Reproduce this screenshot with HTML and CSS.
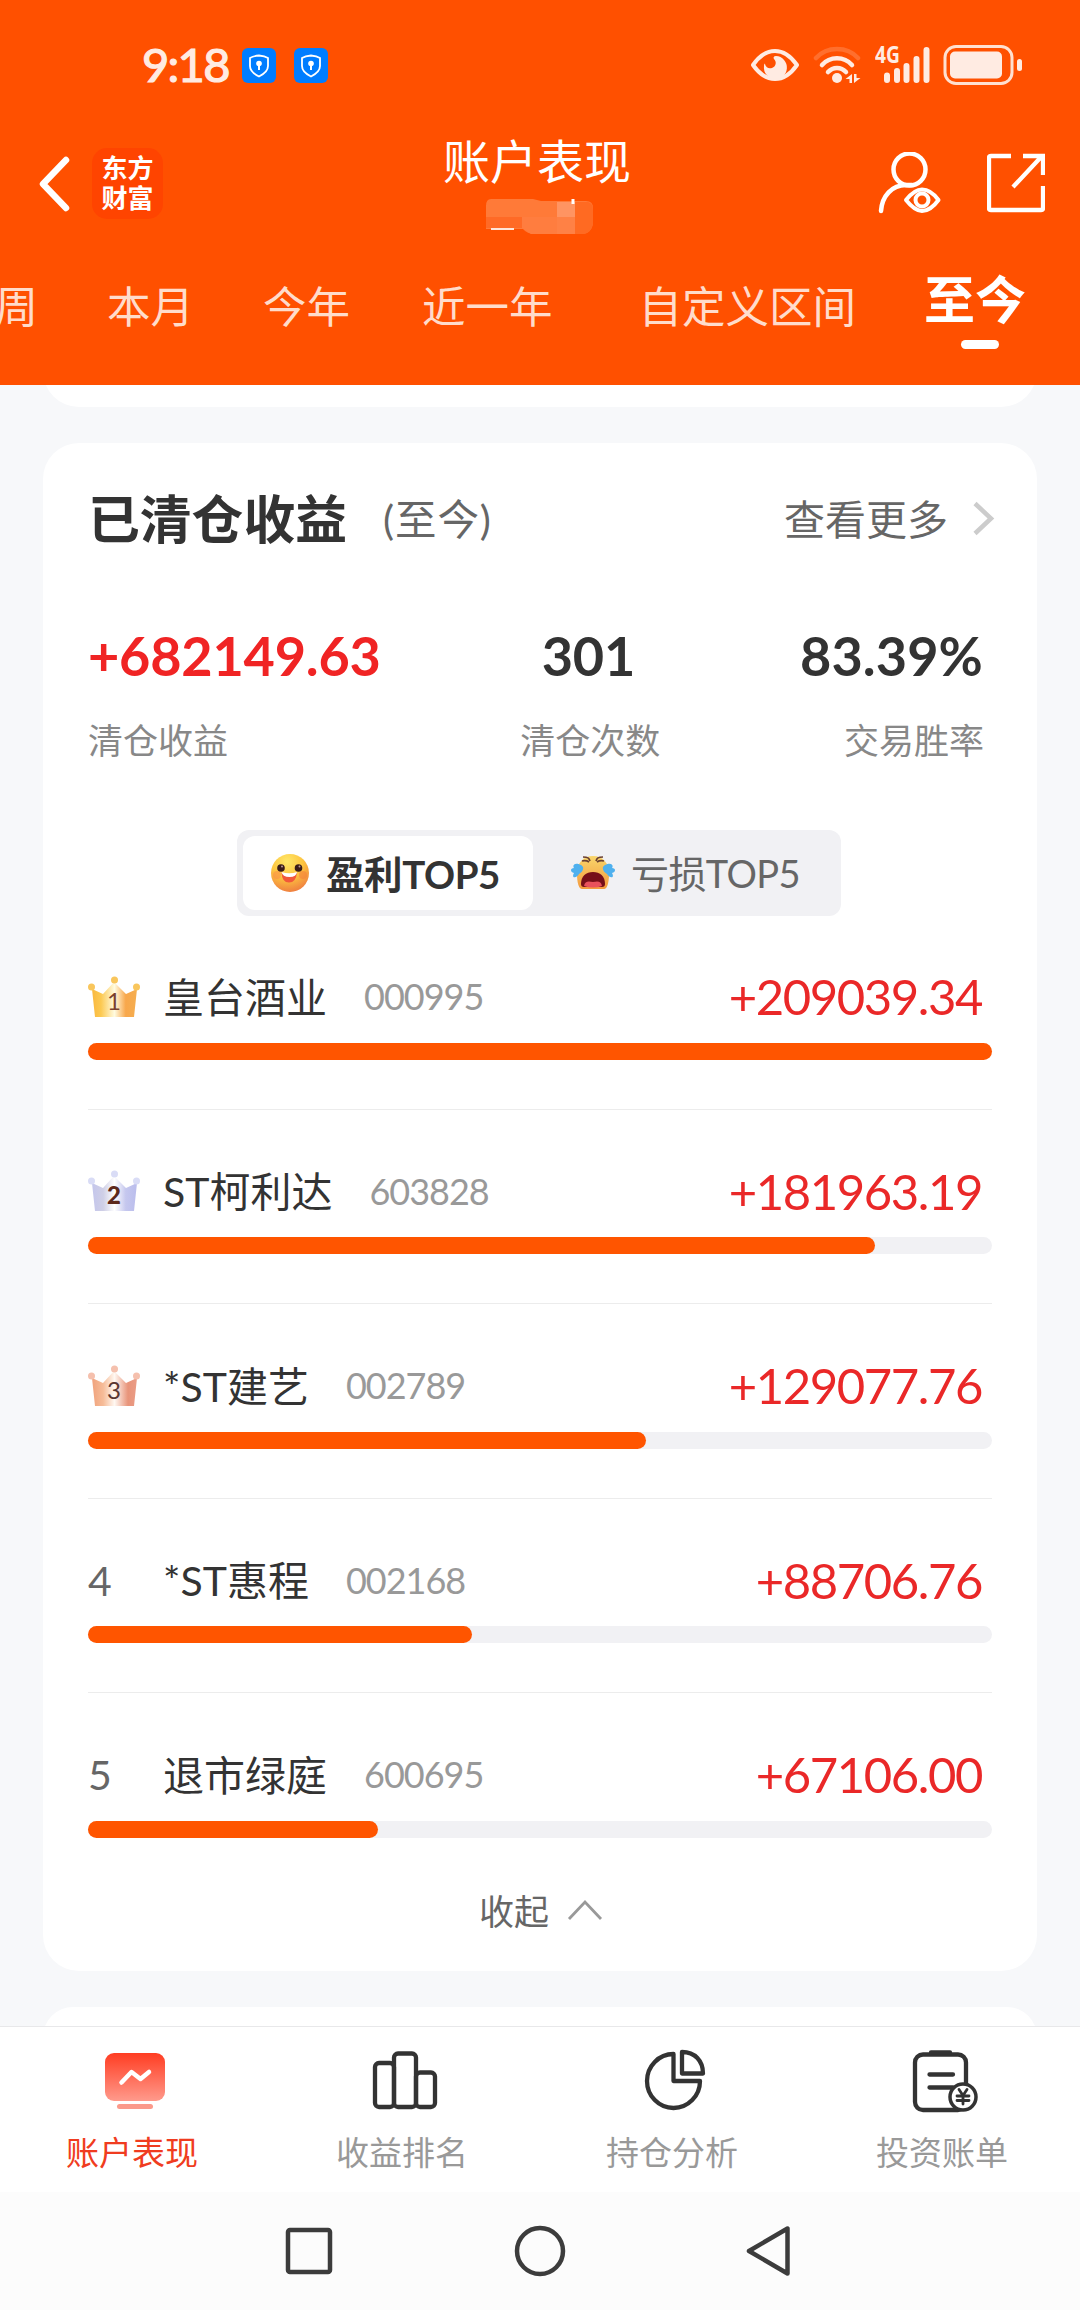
FILE: index.html
```html
<!DOCTYPE html>
<html lang="zh-CN">
<head>
<meta charset="utf-8">
<title>账户表现</title>
<link rel="stylesheet" href="styles.css">
</head>
<body>
<div class="screen">
  <header class="header">
    <div class="status">
      <div class="status-left">
        <span class="clock">9:18</span>
        <svg class="shield" viewBox="0 0 34 35"><rect width="34" height="35" rx="6" fill="#007dff"/><path d="M17 7.5C14 7.8 10.500 8.500 8 10v8c0 5 4 8 9 10.500 5-2.500 9-5.500 9-10.500v-8c-2.500-1.500-6-2.200-9-2.500z" fill="none" stroke="#fff" stroke-width="1.800"/><circle cx="17" cy="15.500" r="2.800" fill="#fff"/><path d="M17 15v7" stroke="#fff" stroke-width="2"/></svg>
        <svg class="shield" viewBox="0 0 34 35"><rect width="34" height="35" rx="6" fill="#007dff"/><path d="M17 7.5C14 7.8 10.500 8.500 8 10v8c0 5 4 8 9 10.500 5-2.500 9-5.500 9-10.500v-8c-2.500-1.500-6-2.200-9-2.500z" fill="none" stroke="#fff" stroke-width="1.800"/><circle cx="17" cy="15.500" r="2.800" fill="#fff"/><path d="M17 15v7" stroke="#fff" stroke-width="2"/></svg>
      </div>
      <div class="status-right">
        <svg width="48" height="40" viewBox="0 0 48 40"><path d="M2 20C9 10 16 6 24 6s15 4 22 14c-7 10-14 14-22 14S9 30 2 20z" fill="none" stroke="#ffebe2" stroke-width="4" stroke-linejoin="round"/><path d="M25 11a11.500 11.500 0 1 1-12 10c0-1 .3-2 .8-2.500C15 23 18 24 21 23c4-1.500 5-6 2-9-1-1-.5-3 2-3z" fill="#ffebe2"/></svg>
        <svg width="48" height="40" viewBox="0 0 48 40"><g fill="none" stroke="#ffebe2" stroke-width="4.500" stroke-linecap="round"><path d="M3 13c11-12 31-12 42 0" stroke-opacity=".2"/><path d="M9 20c8-9 22-9 30 0"/><path d="M15 27c5-5.500 13-5.500 18 0"/></g><circle cx="24" cy="33" r="5" fill="#ffebe2"/><path d="M39 29v9h-2.500v-4h-4zM41 38v-9h2.500v4h4z" fill="#ffebe2"/></svg>
        <div class="signal"><span class="net">4G</span><svg width="56" height="40" viewBox="0 0 56 40"><path d="M12 30.500v4.500M22 26v9M31.500 21v14M41.500 14v21M51.500 5v30" stroke="#ffebe2" stroke-width="6" stroke-linecap="round" fill="none"/></svg></div>
        <svg width="80" height="40" viewBox="0 0 80 40"><rect x="2" y="1.500" width="67" height="37" rx="11" fill="none" stroke="#ffe0d0" stroke-width="3"/><rect x="7" y="6.500" width="52" height="27" rx="5" fill="#ffebe2"/><rect x="74" y="14" width="5" height="12" rx="2.500" fill="#ffebe2"/></svg>
      </div>
    </div>
    <div class="titlebar">
      <div class="title-left">
        <svg width="32" height="60" viewBox="0 0 32 60"><path d="M27 6L4 30l23 24" fill="none" stroke="#fff" stroke-width="6.500" stroke-linecap="round" stroke-linejoin="round"/></svg>
        <div class="logo"><span>东方</span><span>财富</span></div>
      </div>
      <div class="title-mid">
        <h1>账户表现</h1>
        <svg width="110" height="38" viewBox="0 0 110 38"><path d="M6 1h42l8 2h45q7 0 7 7v16q-2 9-10 10H50q-8 0-12-5H1V8q0-7 5-7z" fill="#ff7a38"/><path d="M1 19h71v11H1z" fill="#ff6a26"/><path d="M37 19h35v17H46l-9-6z" fill="#ff7d3f"/><path d="M72 4h18v15H72z" fill="#ff9462"/><path d="M72 19h18v17H72z" fill="#ff8145"/><path d="M90 4h13q5 1 5 8v14q-2 9-9 10h-9z" fill="#ff6a22"/><path d="M6 31h23" stroke="#ffe5d8" stroke-width="2"/><path d="M88 1v5" stroke="#fff" stroke-width="3"/></svg>
      </div>
      <div class="title-right">
        <svg width="64" height="62" viewBox="0 0 64 62" fill="none" stroke="#fff" stroke-width="4.500" stroke-linecap="round"><circle cx="31.500" cy="17.500" r="16"/><path d="M3 59c1-15 11-26 25-26h6"/><path d="M28 48c6-7.500 11-10.500 16-10.500S55 40.500 60.500 48C55 55.500 49 59 44 59s-10-3.500-16-11z" stroke-width="4" stroke-linejoin="round"/><circle cx="44" cy="48" r="6.500" stroke-width="4"/></svg>
        <svg width="58" height="60" viewBox="0 0 58 60" fill="none" stroke="#fff" stroke-width="4.300"><path d="M24 3H4q-2 0-2 2v50q0 2 2 2h50q2 0 2-2V33M36 3h20v19M55 3L26 34"/></svg>
      </div>
    </div>
    <nav class="tabs">
      <span class="tab">本周</span><span class="tab">本月</span><span class="tab">今年</span><span class="tab tab-year">近一年</span><span class="tab tab-custom">自定义区间</span><span class="tab tab-on">至今</span>
    </nav>
  </header>

  <main class="content">
    <div class="card card-prev"></div>
    <section class="card card-main">
      <div class="card-head">
        <h2>已清仓收益</h2><span class="scope">(至今)</span>
        <span class="more">查看更多</span>
        <svg width="24" height="36" viewBox="0 0 24 36"><path d="M3 2.500l16 15L3 32.500" fill="none" stroke="#ccc" stroke-width="4.500"/></svg>
      </div>
      <div class="stats">
        <div class="stat"><b class="up">+682149.63</b><span>清仓收益</span></div>
        <div class="stat stat-mid"><b>301</b><span>清仓次数</span></div>
        <div class="stat stat-end"><b>83.39%</b><span>交易胜率</span></div>
      </div>
      <div class="segment">
        <div class="seg seg-on">
          <svg width="40" height="40" viewBox="0 0 40 40"><defs><radialGradient id="smile" cx=".42" cy=".2" r=".85"><stop offset="0" stop-color="#ffe868"/><stop offset=".5" stop-color="#fdc43f"/><stop offset="1" stop-color="#ee7840"/></radialGradient></defs><circle cx="20" cy="20" r="19" fill="url(#smile)"/><circle cx="7" cy="22" r="4" fill="#fa9148" opacity=".6"/><circle cx="33" cy="22" r="4" fill="#f5823c" opacity=".6"/><circle cx="11" cy="15" r="3.800" fill="#3a1c18"/><circle cx="28.500" cy="15" r="3.800" fill="#3a1c18"/><circle cx="12" cy="13.500" r="1" fill="#b99"/><circle cx="29.500" cy="13.500" r="1" fill="#b99"/><path d="M11.500 19.500q8 3 15.500 0-1 10-8 10t-7.500-10z" fill="#f2573a"/><path d="M11.500 19q8 2.500 15.500 0-.5 5-7.500 5t-8-5z" fill="#fff"/></svg>
          <span>盈利TOP5</span>
        </div>
        <div class="seg">
          <svg width="44" height="38" viewBox="0 0 44 38"><defs><linearGradient id="cry" x1="0" y1="0" x2="0" y2="1"><stop offset="0" stop-color="#f9d66b"/><stop offset="1" stop-color="#f49a3e"/></linearGradient></defs><path d="M22 2c10 0 16 7 16 18 0 9-2 15-5 15H11c-3 0-5-6-5-15C6 9 12 2 22 2z" fill="url(#cry)"/><path d="M10 11C4 8 1 11 3 14c-4 0-4 4 0 5-3 5 2 6 5 1 4-2 6-7 2-9zM34 11c6-3 9 0 7 3 4 0 4 4 0 5 3 5-2 6-5 1-4-2-6-7-2-9z" fill="#4fb0ee"/><path d="M10 30c0-8 5-12 12-12s12 4 12 12q0 3-3 3H13q-3 0-3-3z" fill="#760f19"/><path d="M13 32c1-5 4-5 9-4 5-1 8-1 9 4q-9 3-18 0z" fill="#e8515c"/><path d="M12 3c5 0 6 1 7 4M11 7q4-1 7 1M32 3c-5 0-6 1-7 4M33 7q-4-1-7 1" fill="none" stroke="#6b4032" stroke-width="1.700"/></svg>
          <span>亏损TOP5</span>
        </div>
      </div>

      <ol class="ranks">
        <li class="row"><div class="line"><span class="rank"><svg width="52" height="42" viewBox="0 0 52 42"><defs><linearGradient id="gold"><stop offset="0" stop-color="#f9b83f"/><stop offset=".2" stop-color="#fcc951"/><stop offset=".5" stop-color="#fffbe0"/><stop offset=".75" stop-color="#f8a74b"/><stop offset="1" stop-color="#f5ae50"/></linearGradient></defs><path d="M4 13l11 5L26 6l12 12 11-5-3 28H7z" fill="url(#gold)"/><g fill="#f9c65c"><circle cx="3.500" cy="11" r="3.500"/><circle cx="26.500" cy="4" r="3.500"/><circle cx="48.500" cy="11" r="3.500"/></g><text x="26" y="34" class="crown-no" fill="#7a402c">1</text></svg></span><span class="name">皇台酒业</span><span class="code">000995</span><span class="amount">+209039.34</span></div><div class="track"><div class="fill" style="width:100%"></div></div></li>
        <li class="row"><div class="line"><span class="rank"><svg width="52" height="42" viewBox="0 0 52 42"><defs><linearGradient id="silver"><stop offset="0" stop-color="#c4c6ec"/><stop offset=".25" stop-color="#cfcfe6"/><stop offset=".5" stop-color="#fff"/><stop offset=".75" stop-color="#c5c7ee"/><stop offset="1" stop-color="#babded"/></linearGradient></defs><path d="M4 13l11 5L26 6l12 12 11-5-3 28H7z" fill="url(#silver)"/><g fill="#d9dcf6"><circle cx="3.500" cy="11" r="3.500"/><circle cx="26.500" cy="4" r="3.500"/><circle cx="48.500" cy="11" r="3.500"/></g><text x="26" y="34" class="crown-no crown-bold" fill="#5c281c">2</text></svg></span><span class="name">ST柯利达</span><span class="code">603828</span><span class="amount">+181963.19</span></div><div class="track"><div class="fill" style="width:87.05%"></div></div></li>
        <li class="row"><div class="line"><span class="rank"><svg width="52" height="42" viewBox="0 0 52 42"><defs><linearGradient id="bronze"><stop offset="0" stop-color="#f0a27c"/><stop offset=".25" stop-color="#f6bc98"/><stop offset=".5" stop-color="#fff8f2"/><stop offset=".8" stop-color="#e8947a"/><stop offset="1" stop-color="#ea9c86"/></linearGradient></defs><path d="M4 13l11 5L26 6l12 12 11-5-3 28H7z" fill="url(#bronze)"/><g fill="#f5c0ad"><circle cx="3.500" cy="11" r="3.500"/><circle cx="26.500" cy="4" r="3.500"/><circle cx="48.500" cy="11" r="3.500"/></g><text x="26" y="34" class="crown-no" fill="#5a3630">3</text></svg></span><span class="name">*ST建艺</span><span class="code">002789</span><span class="amount">+129077.76</span></div><div class="track"><div class="fill" style="width:61.75%"></div></div></li>
        <li class="row"><div class="line"><span class="rank">4</span><span class="name">*ST惠程</span><span class="code">002168</span><span class="amount">+88706.76</span></div><div class="track"><div class="fill" style="width:42.44%"></div></div></li>
        <li class="row"><div class="line"><span class="rank">5</span><span class="name">退市绿庭</span><span class="code">600695</span><span class="amount">+67106.00</span></div><div class="track"><div class="fill" style="width:32.1%"></div></div></li>
      </ol>
      <div class="collapse"><span>收起</span><svg width="36" height="22" viewBox="0 0 36 22"><path d="M2 20L18 3l16 17" fill="none" stroke="#999" stroke-width="2.800"/></svg></div>
    </section>
    <div class="card card-next"></div>
  </main>

  <nav class="tabbar">
    <div class="item item-on"><svg width="66" height="64" viewBox="0 0 66 64"><defs><linearGradient id="act" x1="0" y1="0" x2="0" y2="1"><stop offset="0" stop-color="#ff3d22"/><stop offset="1" stop-color="#ff9a8c"/></linearGradient></defs><rect x="3" y="4" width="60" height="48" rx="9" fill="url(#act)"/><path d="M19.500 33.500l10-10.500 9 7L47 23" fill="none" stroke="#fff" stroke-width="4.500" stroke-linecap="round" stroke-linejoin="round"/><rect x="15" y="55" width="36" height="5" rx="2.500" fill="#fb9a8b"/></svg><span>账户表现</span></div>
    <div class="item"><svg width="66" height="64" viewBox="0 0 66 64" fill="none" stroke="#333" stroke-width="4.300"><rect x="3" y="14" width="19" height="44" rx="4"/><rect x="22" y="4.500" width="22" height="53.500" rx="4"/><rect x="44" y="23.500" width="19" height="34.500" rx="4"/></svg><span>收益排名</span></div>
    <div class="item"><svg width="66" height="64" viewBox="0 0 66 64" fill="none" stroke="#333" stroke-width="4.300" stroke-linejoin="round"><path d="M31.500 5A26.500 27 0 1 0 58 32H31.500z"/><path d="M40 3v21.500h21C61 12 53 3 40 3z"/></svg><span>持仓分析</span></div>
    <div class="item"><svg width="66" height="64" viewBox="0 0 66 64" fill="none" stroke="#333" stroke-width="4.300" stroke-linecap="round"><rect x="3" y="5.500" width="51" height="55.500" rx="8"/><path d="M19 3.500h19M17.500 25.500H41M17.500 38.500H41"/><circle cx="51" cy="48" r="13" fill="#fff" stroke-width="3.500"/><path d="M47 40.500l4 6 4-6M51 46.500V55M45 47h12M45 51.500h12" stroke-width="2.800"/></svg><span>投资账单</span></div>
  </nav>
  <div class="sysnav">
    <svg width="52" height="54" viewBox="0 0 52 54"><rect x="5" y="6" width="42" height="42" rx="2" fill="none" stroke="#3c3c3c" stroke-width="4.500"/></svg>
    <svg width="52" height="54" viewBox="0 0 52 54"><circle cx="26" cy="27" r="23" fill="none" stroke="#3c3c3c" stroke-width="4.500"/></svg>
    <svg width="52" height="54" viewBox="0 0 52 54"><path d="M42.500 4.500v45L4 27z" fill="none" stroke="#3c3c3c" stroke-width="4.500" stroke-linejoin="round"/></svg>
  </div>
</div>
</body>
</html>
```

FILE: styles.css
```css
* { box-sizing: border-box; margin: 0; padding: 0; }
body { width: 1080px; height: 2310px; overflow: hidden; background: #f7f8fa; }
svg { display: block; flex: none; }
.screen { width: 1080px; height: 2310px; display: flex; flex-direction: column; font-family: Lato, "Noto Sans CJK SC", sans-serif; color: #333; white-space: nowrap; }

/* header */
.header { height: 385px; background: #ff5000; color: #fff; flex: none; overflow: hidden; }
.status { height: 130px; display: flex; justify-content: space-between; align-items: center; padding: 0 57px 0 142px; }
.status-left { display: flex; align-items: center; }
.clock { font-size: 47px; line-height: 50px; width: 100px; margin-bottom: 2px; color: #ffebe2; -webkit-text-stroke: 1.2px #ffebe2; letter-spacing: -1.7px; }
.shield { width: 34px; height: 35px; margin-right: 18px; }
.status-right { display: flex; align-items: center; }
.status-right > svg:nth-child(2) { margin-left: 14px; }
.signal { position: relative; margin-left: 14px; margin-right: 12px; }
.net { position: absolute; left: 0; top: -3px; font: bold 24px/24px "Open Sans", sans-serif; transform: scaleX(.8); transform-origin: 0 0; color: #ffebe2; }
.titlebar { height: 120px; display: grid; grid-template-columns: 1fr 200px 1fr; }
.title-left { display: flex; align-items: center; height: 107px; padding-left: 39px; gap: 21px; }
.logo { width: 71px; height: 71px; border-radius: 15px; background: #ff4400; display: flex; flex-direction: column; justify-content: center; align-items: center; font-size: 26px; line-height: 30px; font-weight: 700; padding-bottom: 2px; }
.title-mid { display: flex; flex-direction: column; align-items: center; padding-top: 1px; }
h1 { font-size: 47px; line-height: 60px; font-weight: 400; height: 67px; margin-right: 6px; }
.title-right { display: flex; justify-content: flex-end; align-items: center; height: 106px; gap: 45px; padding-right: 35px; }
.tabs { display: flex; align-items: center; height: 112px; margin-left: -49px; }
.tab { font-size: 43.5px; line-height: 60px; color: #ffdccb; margin-right: 69px; }
.tab-year { margin-left: 3px; }
.tab-custom { margin-left: 17px; }
.tab-on { font-size: 51px; font-weight: 700; color: #fff; margin: 7px 0 0 -1px; display: flex; flex-direction: column; align-items: center; }
.tab-on::after { content: ""; width: 38px; height: 9px; border-radius: 5px; background: #fff; margin: 10px 0 1px 10px; }

/* cards */
.content { height: 1641px; padding: 0 43px; overflow: hidden; flex: none; }
.card { background: #fff; border-radius: 36px; }
.card-prev { height: 22px; border-radius: 0; clip-path: inset(-60px 0 0 0 round 36px); }
.card-main { height: 1528px; margin: 36px 0; padding: 45px 45px 0; }
.card-head { display: flex; align-items: center; height: 62px; }
h2 { font-size: 51.8px; line-height: 60px; padding-bottom: 1px; font-weight: 700; color: #333; }
.scope { font-size: 41.500px; color: #666; margin: 0 0 4px 36px; letter-spacing: .9px; }
.more { font-size: 41px; color: #666; margin: 0 24px 4px auto; }
.card-head svg { margin-right: -4px; }
.stats { display: flex; justify-content: space-between; margin: 74px 8px 0 0; }
.stat { display: flex; flex-direction: column; }
.stat b { font-size: 54px; line-height: 64px; font-weight: 700; letter-spacing: -.2px; }
.stat span { font-size: 35px; line-height: 44px; color: #888; margin-top: 30px; }
.stat-mid { align-items: center; }
.stat-mid b { margin-right: 4px; }
.stat-end { align-items: flex-end; }
.stat-end b { letter-spacing: .1px; margin-right: 1px; }
.up { color: #f02424; }
.segment { width: 604px; height: 86px; margin: 68px auto 0 149px; padding: 6px; border-radius: 12px; background: #f1f1f4; display: flex; }
.seg { display: flex; align-items: center; width: 290px; padding-left: 27px; font-size: 38px; letter-spacing: -.6px; color: #666; }
.seg span { margin: 0 0 3px 16px; }
.seg + .seg { padding-left: 38px; }
.seg-on { background: #fff; border-radius: 12px; font-weight: 700; font-size: 38.5px; letter-spacing: -.4px; color: #333; }

/* ranking */
.ranks { list-style: none; margin-top: -1px; }
.row { padding: 51.5px 0 49px; border-bottom: 1px solid #ececec; }
.row:last-child { border: 0; padding-bottom: 0; }
.line { display: flex; align-items: center; height: 60px; padding-right: 8px; }
.rank { width: 75px; font-size: 41px; color: #666; }
.name { font-size: 41px; margin-bottom: 4px; }
.code { font-size: 36px; letter-spacing: -1px; color: #999; margin: 0 0 1px 37px; }
.amount { margin: 0 2px 1px auto; font-size: 49px; letter-spacing: -1.4px; color: #ea2828; }
.crown-no { font: 24px Lato, sans-serif; text-anchor: middle; }
.crown-bold { font-weight: 900; }
.track { height: 17px; margin-top: 16px; border-radius: 9px; background: #f1f1f4; }
.fill { height: 17px; border-radius: 9px; background: #ff5500; }
.collapse { display: flex; align-items: center; justify-content: center; gap: 18px; height: 50px; margin-top: 47px; padding-left: 2px; font-size: 35px; color: #666; }
.collapse span { margin-bottom: 1px; }
.card-next { height: 60px; }

/* bottom bars */
.tabbar { height: 166px; flex: none; background: #fff; border-top: 1px solid #e8e8ea; display: grid; grid-template-columns: repeat(4, 1fr); }
.item { display: flex; flex-direction: column; align-items: center; padding-top: 22px; font-size: 33px; line-height: 44px; color: #999; }
.item span { margin: 17px 6px 0 0; }
.item-on { color: #f03c20; }
.sysnav { height: 118px; flex: none; background: #fcfcfc; display: flex; justify-content: center; gap: 179px; padding-top: 32px; }
```
